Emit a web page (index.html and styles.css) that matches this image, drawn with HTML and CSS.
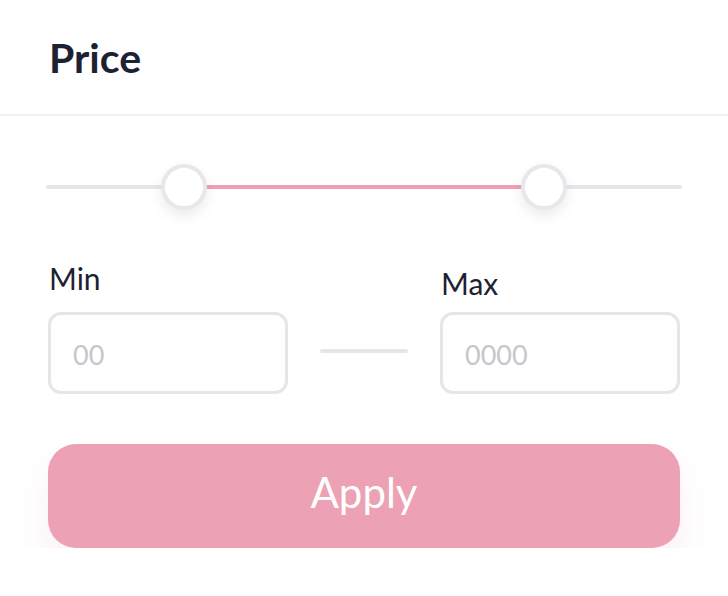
FILE: index.html
```html
<!DOCTYPE html>
<html lang="en">
<head>
    <meta charset="UTF-8">
    <meta name="viewport" content="width=device-width, initial-scale=1.0">
    <title>Price filter</title>
    <link rel="stylesheet" href="styles.css">
</head>
<body>

    <div class="panel">
        <div class="panel-head">
            <h2 class="panel-title">Price</h2>
        </div>

        <div class="panel-body">
            <div class="range">
                <div class="range-track"></div>
                <div class="range-fill" style="left: 21.7%; right: 21.7%;"></div>
                <span class="range-thumb" style="left: 21.7%;"></span>
                <span class="range-thumb" style="left: 78.3%;"></span>
            </div>

            <div class="fields">
                <label class="field">
                    <span class="field-label">Min</span>
                    <input class="field-input" type="text" placeholder="00">
                </label>
                <div class="field-dash"></div>
                <label class="field field--max">
                    <span class="field-label">Max</span>
                    <input class="field-input" type="text" placeholder="0000">
                </label>
            </div>

            <button class="apply">Apply</button>
        </div>
    </div>

</body>
</html>
```

FILE: styles.css
```css
*, *::before, *::after {
  box-sizing: border-box;
}

body {
  margin: 0;
  background: #fff;
  color: #1d2233;
  font-family: 'Lato', sans-serif;
}

.panel-head {
  height: 116px;
  padding: 34px 49px 0;
  border-bottom: 2px solid #efeff4;
}

.panel-title {
  margin: 0;
  font-size: 41px;
  line-height: 48px;
  font-weight: 700;
}

.panel-body {
  padding: 48px 48px 0;
}

.range {
  position: relative;
  height: 46px;
  margin: 0 -2px;
}

.range-track,
.range-fill {
  position: absolute;
  top: 21px;
  height: 4px;
  border-radius: 2px;
}

.range-track {
  left: 0;
  right: 0;
  background: #e6e6ea;
}

.range-fill {
  background: #eca2b4;
}

.range-thumb {
  position: absolute;
  top: 0;
  width: 46px;
  height: 46px;
  margin-left: -23px;
  border: 4px solid #e7e7ec;
  border-radius: 50%;
  background: #fff;
  box-shadow: 0 6px 14px rgba(0, 0, 0, 0.08);
}

.fields {
  display: grid;
  grid-template-columns: 240px 1fr 240px;
  align-items: end;
  margin-top: 50px;
}

.field {
  display: flex;
  flex-direction: column;
  gap: 16px;
}

.field--max {
  gap: 11px;
}

.field-label {
  padding-left: 1px;
  font-size: 30px;
  line-height: 36px;
}

.field-input {
  width: 240px;
  height: 82px;
  padding: 2px 22px 0;
  border: 3px solid #e5e5ea;
  border-radius: 13px;
  outline: none;
  color: #1d2233;
  font-family: inherit;
  font-size: 27px;
}

.field-input::placeholder {
  color: #c6c6cb;
}

.field-dash {
  align-self: center;
  height: 4px;
  margin: 48px 32px 0;
  border-radius: 2px;
  background: #e6e6ea;
}

.apply {
  display: block;
  width: 100%;
  height: 104px;
  margin-top: 50px;
  padding: 0 0 8px;
  border: none;
  border-radius: 28px;
  background: #eca2b4;
  color: #fff;
  font-family: inherit;
  font-size: 42px;
  cursor: pointer;
  box-shadow: 0 20px 32px rgba(236, 162, 180, 0.16);
}
```
